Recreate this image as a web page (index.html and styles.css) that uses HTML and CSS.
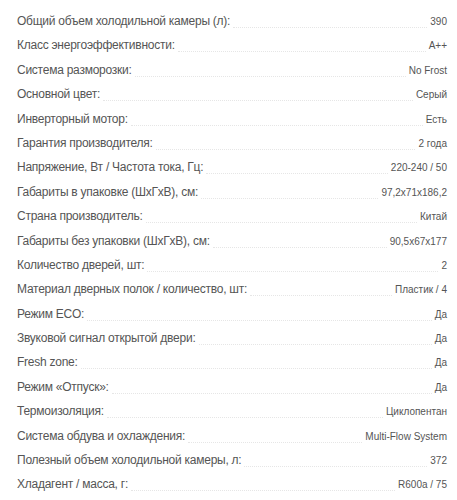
FILE: index.html
```html
<!DOCTYPE html>
<html lang="ru">
<head>
    <meta charset="UTF-8">
    <meta name="viewport" content="width=device-width, initial-scale=1.0">
    <title>Характеристики</title>
    <link rel="stylesheet" href="styles.css">
</head>
<body>

    <div class="specs">
        <div class="row"><span class="label">Общий объем холодильной камеры (л):</span><span class="dots"></span><span class="value">390</span></div>
        <div class="row"><span class="label">Класс энергоэффективности:</span><span class="dots"></span><span class="value">A++</span></div>
        <div class="row"><span class="label">Система разморозки:</span><span class="dots"></span><span class="value">No Frost</span></div>
        <div class="row"><span class="label">Основной цвет:</span><span class="dots"></span><span class="value">Серый</span></div>
        <div class="row"><span class="label">Инверторный мотор:</span><span class="dots"></span><span class="value">Есть</span></div>
        <div class="row"><span class="label">Гарантия производителя:</span><span class="dots"></span><span class="value">2 года</span></div>
        <div class="row"><span class="label">Напряжение, Вт / Частота тока, Гц:</span><span class="dots"></span><span class="value">220-240 / 50</span></div>
        <div class="row"><span class="label">Габариты в упаковке (ШхГхВ), см:</span><span class="dots"></span><span class="value">97,2x71x186,2</span></div>
        <div class="row"><span class="label">Страна производитель:</span><span class="dots"></span><span class="value">Китай</span></div>
        <div class="row"><span class="label">Габариты без упаковки (ШхГхВ), см:</span><span class="dots"></span><span class="value">90,5x67x177</span></div>
        <div class="row"><span class="label">Количество дверей, шт:</span><span class="dots"></span><span class="value">2</span></div>
        <div class="row"><span class="label">Материал дверных полок / количество, шт:</span><span class="dots"></span><span class="value">Пластик / 4</span></div>
        <div class="row"><span class="label">Режим ECO:</span><span class="dots"></span><span class="value">Да</span></div>
        <div class="row"><span class="label">Звуковой сигнал открытой двери:</span><span class="dots"></span><span class="value">Да</span></div>
        <div class="row"><span class="label">Fresh zone:</span><span class="dots"></span><span class="value">Да</span></div>
        <div class="row"><span class="label">Режим «Отпуск»:</span><span class="dots"></span><span class="value">Да</span></div>
        <div class="row"><span class="label">Термоизоляция:</span><span class="dots"></span><span class="value">Циклопентан</span></div>
        <div class="row"><span class="label">Система обдува и охлаждения:</span><span class="dots"></span><span class="value">Multi-Flow System</span></div>
        <div class="row"><span class="label">Полезный объем холодильной камеры, л:</span><span class="dots"></span><span class="value">372</span></div>
        <div class="row"><span class="label">Хладагент / масса, г:</span><span class="dots"></span><span class="value">R600a / 75</span></div>
    </div>

</body>
</html>
```

FILE: styles.css
```css
* {
    margin: 0;
    padding: 0;
    box-sizing: border-box;
}

body {
    font-family: 'Liberation Sans', Arial, sans-serif;
    background-color: #ffffff;
    color: #555;
}

.specs {
    padding: 9px 10px 0 17px;
}

.row {
    display: flex;
    align-items: baseline;
    height: 24.4px;
    line-height: 24px;
}

.label {
    font-size: 12px;
    letter-spacing: -0.25px;
    color: #555;
    white-space: nowrap;
}

.dots {
    flex: 1;
    margin: 0 3px;
    border-bottom: 1px dotted #e6e6e6;
    position: relative;
    top: 3px;
}

.value {
    font-size: 10px;
    color: #555;
    white-space: nowrap;
}
```
